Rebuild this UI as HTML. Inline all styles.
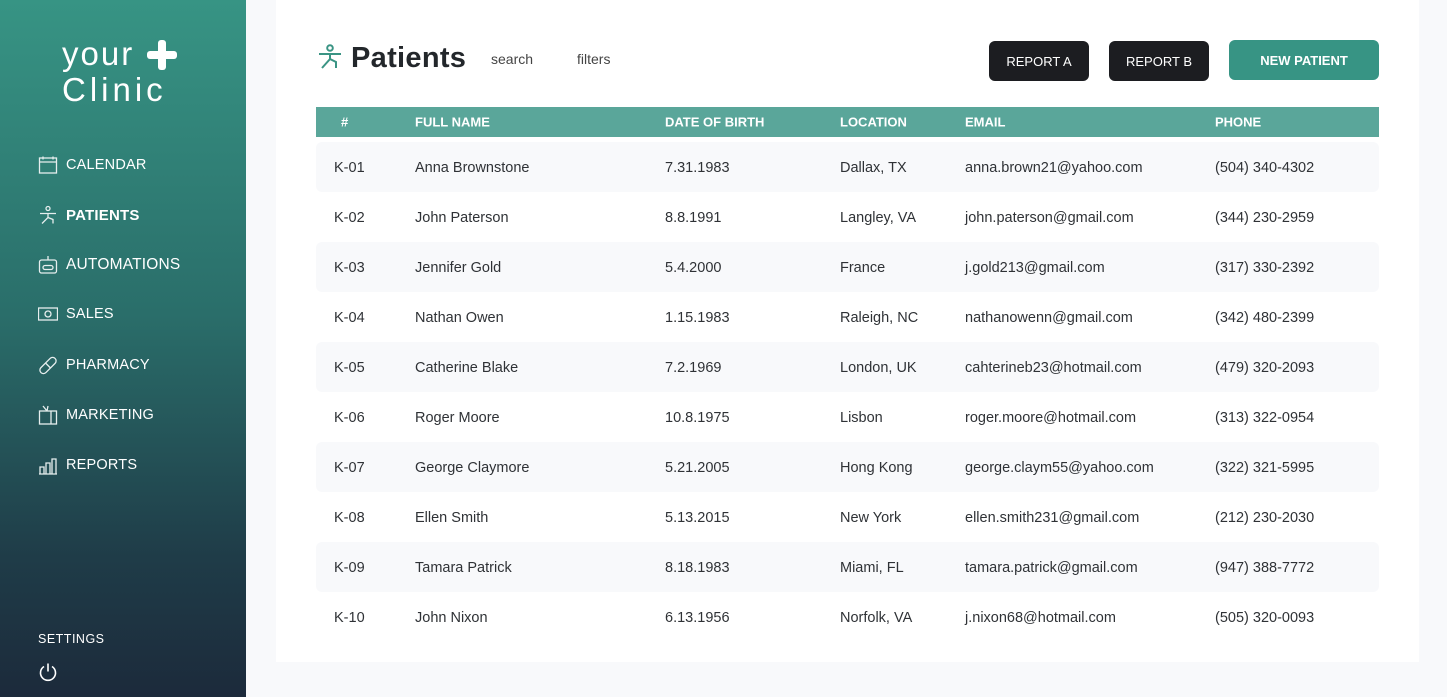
<!DOCTYPE html>
<html><head><meta charset="utf-8"><style>
*{margin:0;padding:0;box-sizing:border-box}
body{width:1447px;height:697px;overflow:hidden;background:#f8f9fb;font-family:"Liberation Sans",sans-serif;position:relative}
.side{position:absolute;left:0;top:0;width:246px;height:697px;background:linear-gradient(#379484 0%,#2a6e6a 45%,#1f3c48 80%,#1c2a3b 100%);color:#fff}
.logo{position:absolute;left:62px;top:36px;font-size:33px;line-height:36px;letter-spacing:2px;color:#fff}
.plus{position:absolute;left:147px;top:40px;width:30px;height:30px}
.plus:before{content:"";position:absolute;left:11px;top:0;width:8px;height:30px;background:#fff;border-radius:3px}
.plus:after{content:"";position:absolute;left:0;top:11px;width:30px;height:8px;background:#fff;border-radius:3px}
.nav{position:absolute;left:38px;font-size:14.5px;color:#fff;display:flex;align-items:center;gap:8px;letter-spacing:.2px}
.nav svg{width:20px;height:20px;fill:none;stroke:#e6eeee;stroke-width:1.3}
.card{position:absolute;left:276px;top:0;width:1143px;height:662px;background:#fff}
h1{position:absolute;left:351px;top:42px;font-size:29px;font-weight:bold;color:#23272b;letter-spacing:.3px}
.lk{position:absolute;top:51px;font-size:14px;color:#444}
.btn{position:absolute;top:41px;height:40px;border-radius:6px;color:#fff;font-size:13px;display:flex;align-items:center;justify-content:center}
.thead{position:absolute;left:316px;top:107px;width:1063px;height:30px;background:#5aa69a;color:#fff;font-weight:bold;font-size:13px}
.c{position:absolute;white-space:nowrap}
.row{position:absolute;left:316px;width:1063px;height:50px;border-radius:6px;font-size:14.5px;color:#2f3236}
.row .c,.thead .c{top:50%;transform:translateY(-50%)}
</style></head><body>
<div class="side">
<div class="logo">your<br><span style="letter-spacing:4px">Clinic</span></div><div class="plus"></div>
<div class="nav" style="top:155px"><svg viewBox="0 0 20 20"><rect x="1.5" y="3" width="17" height="15"/><path d="M1.5 7h17M5 1.5v3M15 1.5v3"/></svg>CALENDAR</div>
<div class="nav" style="top:205px;font-weight:bold;font-size:15px"><svg viewBox="0 0 20 20"><circle cx="10" cy="3.5" r="2"/><path d="M2 8.5h16M10 8.5v4l-6 6M10 12.5l5 2v4"/></svg>PATIENTS</div>
<div class="nav" style="top:255px;font-size:15.5px"><svg viewBox="0 0 20 20"><rect x="1.5" y="5" width="17" height="13" rx="2"/><path d="M10 1v4"/><rect x="5" y="10.5" width="10" height="4" rx="2"/></svg>AUTOMATIONS</div>
<div class="nav" style="top:304px"><svg viewBox="0 0 20 20"><rect x="0.5" y="4" width="19" height="12"/><circle cx="10" cy="10" r="3"/></svg>SALES</div>
<div class="nav" style="top:355px"><svg viewBox="0 0 20 20"><rect x="0" y="7" width="20" height="7" rx="3.5" transform="rotate(-45 10 10.5)"/><path d="M7.5 8l5 5"/></svg>PHARMACY</div>
<div class="nav" style="top:405px"><svg viewBox="0 0 20 20"><rect x="1.5" y="6" width="17" height="13"/><path d="M13 6v13M5 1l4 5M10 1l-1 5"/></svg>MARKETING</div>
<div class="nav" style="top:455px"><svg viewBox="0 0 20 20"><path d="M1 19h18M2 19v-7h4v7M8 19v-11h4v11M14 19v-15h4v15"/></svg>REPORTS</div>
<div class="c" style="left:38px;top:632px;font-size:12.5px;letter-spacing:.5px">SETTINGS</div>
<svg style="position:absolute;left:38px;top:662px" width="20" height="20" viewBox="0 0 20 20" fill="none" stroke="#fff" stroke-width="1.6"><path d="M6 4.5A7.5 7.5 0 1 0 14 4.5M10 1.5v8"/></svg>
</div>
<div class="card"></div>
<svg style="position:absolute;left:318px;top:44px" width="24" height="26" viewBox="0 0 24 26" fill="none" stroke="#3a9484" stroke-width="2"><circle cx="12" cy="4" r="2.8"/><path d="M1 10h22M12 10v5l-8 9M12 15l6 3v6"/></svg>
<h1>Patients</h1>
<div class="lk" style="left:491px">search</div>
<div class="lk" style="left:577px">filters</div>
<div class="btn" style="left:989px;width:100px;background:#1c1d21">REPORT A</div>
<div class="btn" style="left:1109px;width:100px;background:#1c1d21">REPORT B</div>
<div class="btn" style="left:1229px;width:150px;top:40px;background:#379484;font-weight:bold">NEW PATIENT</div>
<div class="thead"><span class="c" style="left:25px">#</span><span class="c" style="left:99px">FULL NAME</span><span class="c" style="left:349px">DATE OF BIRTH</span><span class="c" style="left:524px">LOCATION</span><span class="c" style="left:649px">EMAIL</span><span class="c" style="left:899px">PHONE</span></div>
<div id="rows"></div>
<script>
var d=[["K-01","Anna Brownstone","7.31.1983","Dallax, TX","anna.brown21@yahoo.com","(504) 340-4302"],["K-02","John Paterson","8.8.1991","Langley, VA","john.paterson@gmail.com","(344) 230-2959"],["K-03","Jennifer Gold","5.4.2000","France","j.gold213@gmail.com","(317) 330-2392"],["K-04","Nathan Owen","1.15.1983","Raleigh, NC","nathanowenn@gmail.com","(342) 480-2399"],["K-05","Catherine Blake","7.2.1969","London, UK","cahterineb23@hotmail.com","(479) 320-2093"],["K-06","Roger Moore","10.8.1975","Lisbon","roger.moore@hotmail.com","(313) 322-0954"],["K-07","George Claymore","5.21.2005","Hong Kong","george.claym55@yahoo.com","(322) 321-5995"],["K-08","Ellen Smith","5.13.2015","New York","ellen.smith231@gmail.com","(212) 230-2030"],["K-09","Tamara Patrick","8.18.1983","Miami, FL","tamara.patrick@gmail.com","(947) 388-7772"],["K-10","John Nixon","6.13.1956","Norfolk, VA","j.nixon68@hotmail.com","(505) 320-0093"]];
var x=[18,99,349,524,649,899],h="";
d.forEach(function(r,i){h+='<div class="row" style="top:'+(142+i*50)+'px;background:'+(i%2?'#fff':'#f8f9fb')+'">';r.forEach(function(v,j){h+='<span class="c" style="left:'+x[j]+'px;margin-top:1px">'+v+'</span>'});h+='</div>'});
document.getElementById('rows').innerHTML=h;
</script>
</body></html>
